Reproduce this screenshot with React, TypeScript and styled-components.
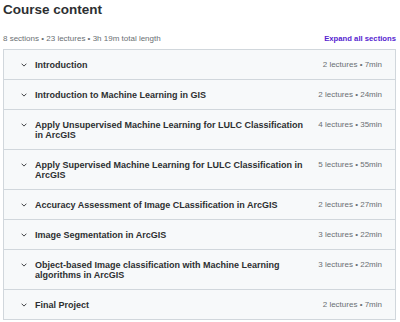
import React from "react";
import styled, { createGlobalStyle } from "styled-components";

const Global = createGlobalStyle`
  html, body { margin: 0; padding: 0; background: #ffffff; }
  body { font-family: "Liberation Sans", Arial, sans-serif; color: #2d2f31; }
  * { box-sizing: border-box; }
`;

const Page = styled.div`
  padding: 0 4px 0 3px;
  width: 400px;
`;

const Title = styled.h2`
  margin: 0;
  padding-top: 1px;
  font-size: 13.5px;
  line-height: 18px;
  font-weight: 700;
  color: #2d2f31;
`;

const StatsBar = styled.div`
  display: flex;
  align-items: center;
  justify-content: space-between;
  margin-top: 13px;
  height: 12px;
  margin-bottom: 5px;
`;

const Stats = styled.span`
  font-size: 8px;
  color: #6a6f73;
`;

const ExpandLink = styled.button`
  background: none;
  border: 0;
  padding: 0;
  font-family: inherit;
  font-size: 7.7px;
  font-weight: 700;
  color: #5624d0;
  cursor: pointer;
`;

const Box = styled.div`
  border: 1px solid #d1d7dc;
  border-bottom: 0;
`;

const Row = styled.div`
  display: flex;
  align-items: flex-start;
  gap: 10px;
  padding: 10px 13px 9px 17px;
  background: #f7f9fa;
  border-bottom: 1px solid #d1d7dc;
`;

const Lead = styled.div`
  flex: 1;
  display: flex;
  align-items: flex-start;
  gap: 8px;
`;

const Chevron = styled.span`
  flex: none;
  width: 6px;
  height: 10px;
  display: flex;
  align-items: center;
`;

const RowTitle = styled.span`
  flex: 1;
  font-size: 9px;
  line-height: 10px;
  font-weight: 700;
  color: #2d2f31;
`;

const Meta = styled.span`
  flex: none;
  font-size: 8px;
  line-height: 10px;
  color: #6a6f73;
`;

const sections = [
  { t: "Introduction", l: 2, m: "7min" },
  { t: "Introduction to Machine Learning in GIS", l: 2, m: "24min" },
  { t: "Apply Unsupervised Machine Learning for LULC Classification in ArcGIS", l: 4, m: "35min" },
  { t: "Apply Supervised Machine Learning for LULC Classification in ArcGIS", l: 5, m: "55min" },
  { t: "Accuracy Assessment of Image CLassification in ArcGIS", l: 2, m: "27min" },
  { t: "Image Segmentation in ArcGIS", l: 3, m: "22min" },
  { t: "Object-based Image classification with Machine Learning algorithms in ArcGIS", l: 3, m: "22min" },
  { t: "Final Project", l: 2, m: "7min" },
];

const ChevronIcon = () => (
  <svg width="6" height="4" viewBox="0 0 6 4" fill="none">
    <path d="M0.6 0.7 L3 3.1 L5.4 0.7" stroke="#2d2f31" strokeWidth="0.9" />
  </svg>
);

export default function App() {
  return (
    <Page>
      <Global />
      <Title>Course content</Title>
      <StatsBar>
        <Stats>8 sections • 23 lectures • 3h 19m total length</Stats>
        <ExpandLink>Expand all sections</ExpandLink>
      </StatsBar>
      <Box>
        {sections.map((s) => (
          <Row key={s.t}>
            <Lead>
              <Chevron>
                <ChevronIcon />
              </Chevron>
              <RowTitle>{s.t}</RowTitle>
            </Lead>
            <Meta>
              {s.l} lectures • {s.m}
            </Meta>
          </Row>
        ))}
      </Box>
    </Page>
  );
}
